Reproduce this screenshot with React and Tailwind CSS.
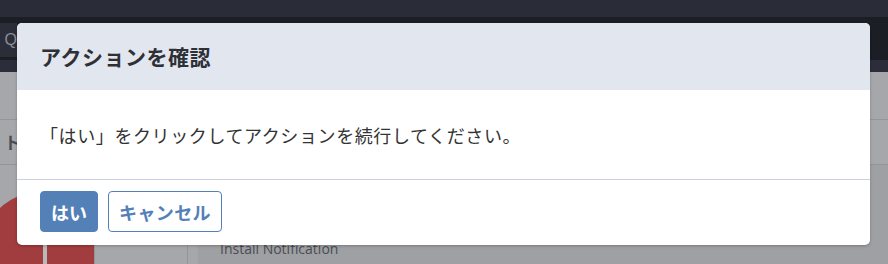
import React from 'react'

const jp = { fontFamily: '"Noto Sans CJK JP", "Noto Sans", sans-serif' }

function Backdrop() {
  // page behind the dimmed overlay (colours already dimmed)
  return (
    <div className="flex flex-col w-full h-full bg-[#a6a7ab]">
      <div className="h-[17px] bg-[#2a2c38]" />
      <div className="h-[43px] bg-[#1b1e25] flex">
        <div className="w-[17px] h-[34px] mt-[6px] bg-[#2b2d38] overflow-hidden flex justify-end items-center">
          <span className="text-[16px] text-[#8a8d96] leading-none" style={{ fontFamily: '"Liberation Sans", sans-serif' }}>
            Q
          </span>
        </div>
      </div>
      <div className="h-[12px] bg-[#2b2d3a]" />
      <div className="h-[48px] border-b border-[#94959a]" />
      <div className="h-[45px] border-b border-[#94959a] flex items-center pl-[4px]">
        <span className="text-[17px] font-bold text-[#4b4d55]" style={jp}>ト</span>
      </div>
      <div className="flex-1 flex">
        <div className="w-[95px] border-r border-[#94959a] relative overflow-hidden">
          <div className="absolute left-[-18px] top-[27px] w-[116px] h-[116px] rounded-full bg-[#a13d3e]" />
          <div className="absolute left-[43px] top-[58px] w-[4px] h-[50px] bg-[#b9b9bc]" />
        </div>
        <div className="w-[93px] border-r border-[#94959a]" />
        <div className="w-[10px]" />
        <div className="flex-1 bg-[#9fa0a4] pl-[22px] pt-[70px]">
          <span className="text-[14px] text-[#4a4c52]" style={{ fontFamily: '"Open Sans", sans-serif' }}>
            Install Notification
          </span>
        </div>
      </div>
    </div>
  )
}

export default function App() {
  return (
    <div className="relative w-[888px] h-[264px] overflow-hidden" style={jp}>
      <Backdrop />
      <div className="absolute left-[17px] top-[23px] w-[853px] h-[222px] rounded-[5px] overflow-hidden bg-white flex flex-col shadow-[0_1px_3px_rgba(0,0,0,0.25)]">
        <div className="h-[67px] bg-[#e2e6ef] flex items-center px-[23px]">
          <h2 className="text-[21px] font-bold text-[#2e3035] leading-none tracking-[0.5px]">アクションを確認</h2>
        </div>
        <div className="h-[90px] flex items-center px-[23px] border-b border-[#cbd2dc]">
          <p className="text-[18px] text-[#333333] leading-none tracking-[0.6px]">
            「はい」をクリックしてアクションを続行してください。
          </p>
        </div>
        <div className="flex-1 flex items-start gap-[10px] px-[23px] pt-[11px]">
          <button className="h-[41px] px-[10px] rounded-[4px] border border-[#5480b8] bg-[#5480b8] text-white text-[18px] font-bold leading-none">
            はい
          </button>
          <button className="h-[41px] px-[10px] rounded-[4px] border border-[#5480b8] bg-white text-[#5480b8] text-[18px] font-bold leading-none tracking-[0.4px]">
            キャンセル
          </button>
        </div>
      </div>
    </div>
  )
}
